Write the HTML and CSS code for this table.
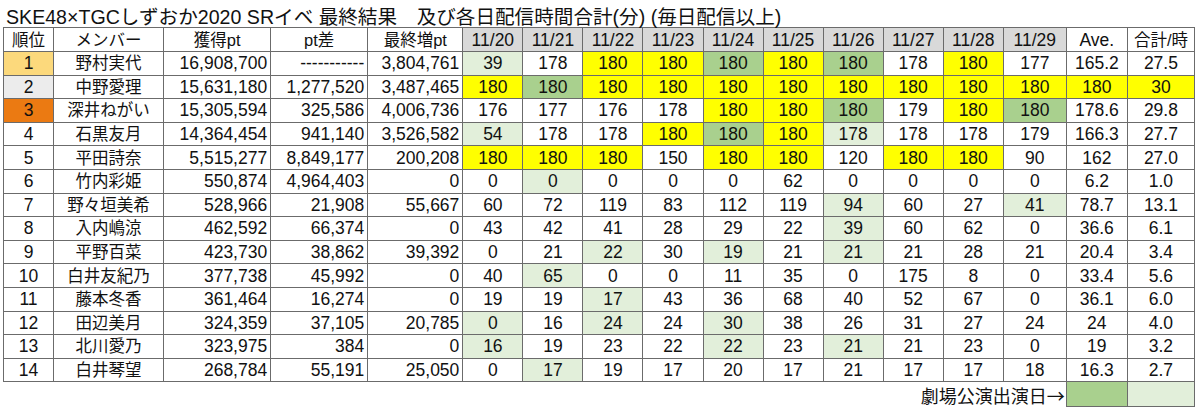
FILE: index.html
```html
<!DOCTYPE html>
<html lang="ja">
<head>
<meta charset="utf-8">
<title>SKE48×TGCしずおか2020 SRイベ 最終結果</title>
<link rel="stylesheet" href="styles.css">
</head>
<body>
<div class="page">
  <div class="title">SKE48×TGCしずおか2020 SRイベ 最終結果　及び各日配信時間合計(分) (毎日配信以上)</div>
  <table class="sheet">
    <colgroup>
      <col class="c-rank"><col class="c-name"><col class="c-pt"><col class="c-diff"><col class="c-inc">
      <col class="c-day"><col class="c-day"><col class="c-day"><col class="c-day"><col class="c-day">
      <col class="c-day"><col class="c-day"><col class="c-day"><col class="c-day"><col class="c-day29">
      <col class="c-ave"><col class="c-tot">
    </colgroup>
    <thead>
      <tr class="head">
        <th class="jp">順位</th><th class="jp">メンバー</th><th class="jp">獲得pt</th><th class="jp">pt差</th><th class="jp">最終増pt</th>
        <th class="dh">11/20</th><th class="dh">11/21</th><th class="dh">11/22</th><th class="dh">11/23</th><th class="dh">11/24</th>
        <th class="dh">11/25</th><th class="dh">11/26</th><th class="dh">11/27</th><th class="dh">11/28</th><th class="dh">11/29</th>
        <th>Ave.</th><th class="jp">合計/時</th>
      </tr>
    </thead>
    <tbody>
      <tr><td class="r1">1</td><td class="nm">野村実代</td><td class="n">16,908,700</td><td class="n">-----------</td><td class="n">3,804,761</td>
        <td class="l">39</td><td>178</td><td class="y">180</td><td class="y">180</td><td class="g">180</td><td class="y">180</td><td class="g">180</td><td>178</td><td class="y">180</td><td>177</td><td>165.2</td><td>27.5</td></tr>
      <tr><td class="r2">2</td><td class="nm">中野愛理</td><td class="n">15,631,180</td><td class="n">1,277,520</td><td class="n">3,487,465</td>
        <td class="y">180</td><td class="g">180</td><td class="y">180</td><td class="y">180</td><td class="y">180</td><td class="y">180</td><td class="y">180</td><td class="y">180</td><td class="y">180</td><td class="y">180</td><td class="y">180</td><td class="y">30</td></tr>
      <tr><td class="r3">3</td><td class="nm">深井ねがい</td><td class="n">15,305,594</td><td class="n">325,586</td><td class="n">4,006,736</td>
        <td>176</td><td>177</td><td>176</td><td>178</td><td class="y">180</td><td class="y">180</td><td class="g">180</td><td>179</td><td class="y">180</td><td class="g">180</td><td>178.6</td><td>29.8</td></tr>
      <tr><td>4</td><td class="nm">石黒友月</td><td class="n">14,364,454</td><td class="n">941,140</td><td class="n">3,526,582</td>
        <td class="l">54</td><td>178</td><td>178</td><td class="y">180</td><td class="g">180</td><td class="y">180</td><td class="l">178</td><td>178</td><td>178</td><td>179</td><td>166.3</td><td>27.7</td></tr>
      <tr><td>5</td><td class="nm">平田詩奈</td><td class="n">5,515,277</td><td class="n">8,849,177</td><td class="n">200,208</td>
        <td class="y">180</td><td class="y">180</td><td class="y">180</td><td>150</td><td class="y">180</td><td class="y">180</td><td>120</td><td class="y">180</td><td class="y">180</td><td>90</td><td>162</td><td>27.0</td></tr>
      <tr><td>6</td><td class="nm">竹内彩姫</td><td class="n">550,874</td><td class="n">4,964,403</td><td class="n">0</td>
        <td>0</td><td class="l">0</td><td>0</td><td>0</td><td>0</td><td>62</td><td>0</td><td>0</td><td>0</td><td>0</td><td>6.2</td><td>1.0</td></tr>
      <tr><td>7</td><td class="nm">野々垣美希</td><td class="n">528,966</td><td class="n">21,908</td><td class="n">55,667</td>
        <td>60</td><td>72</td><td>119</td><td>83</td><td>112</td><td>119</td><td class="l">94</td><td>60</td><td>27</td><td class="l">41</td><td>78.7</td><td>13.1</td></tr>
      <tr><td>8</td><td class="nm">入内嶋涼</td><td class="n">462,592</td><td class="n">66,374</td><td class="n">0</td>
        <td>43</td><td>42</td><td>41</td><td>28</td><td>29</td><td>22</td><td class="l">39</td><td>60</td><td>62</td><td>0</td><td>36.6</td><td>6.1</td></tr>
      <tr><td>9</td><td class="nm">平野百菜</td><td class="n">423,730</td><td class="n">38,862</td><td class="n">39,392</td>
        <td>0</td><td>21</td><td class="l">22</td><td>30</td><td class="l">19</td><td>21</td><td class="l">21</td><td>21</td><td>28</td><td>21</td><td>20.4</td><td>3.4</td></tr>
      <tr><td>10</td><td class="nm">白井友紀乃</td><td class="n">377,738</td><td class="n">45,992</td><td class="n">0</td>
        <td>40</td><td class="l">65</td><td>0</td><td>0</td><td>11</td><td>35</td><td>0</td><td>175</td><td>8</td><td>0</td><td>33.4</td><td>5.6</td></tr>
      <tr><td>11</td><td class="nm">藤本冬香</td><td class="n">361,464</td><td class="n">16,274</td><td class="n">0</td>
        <td>19</td><td>19</td><td class="l">17</td><td>43</td><td>36</td><td>68</td><td>40</td><td>52</td><td>67</td><td>0</td><td>36.1</td><td>6.0</td></tr>
      <tr><td>12</td><td class="nm">田辺美月</td><td class="n">324,359</td><td class="n">37,105</td><td class="n">20,785</td>
        <td class="l">0</td><td>16</td><td class="l">24</td><td>24</td><td class="l">30</td><td>38</td><td>26</td><td>31</td><td>27</td><td>24</td><td>24</td><td>4.0</td></tr>
      <tr><td>13</td><td class="nm">北川愛乃</td><td class="n">323,975</td><td class="n">384</td><td class="n">0</td>
        <td class="l">16</td><td>19</td><td>23</td><td>22</td><td class="l">22</td><td>23</td><td class="l">21</td><td>21</td><td>23</td><td>0</td><td>19</td><td>3.2</td></tr>
      <tr><td>14</td><td class="nm">白井琴望</td><td class="n">268,784</td><td class="n">55,191</td><td class="n">25,050</td>
        <td>0</td><td class="l">17</td><td>19</td><td>17</td><td>20</td><td>17</td><td>21</td><td>17</td><td>17</td><td>18</td><td>16.3</td><td>2.7</td></tr>
    </tbody>
    <tfoot>
      <tr class="legend">
        <td class="legend-label" colspan="15">劇場公演出演日→</td>
        <td class="g box"></td>
        <td class="l box"></td>
      </tr>
    </tfoot>
  </table>
</div>
</body>
</html>
```

FILE: styles.css
```css
html, body {
  margin: 0;
  padding: 0;
  background: #ffffff;
}

.page {
  padding-left: 3px;
  font-family: "Liberation Sans", "Noto Sans CJK JP", sans-serif;
  color: #111111;
}

.title {
  height: 20px;
  padding-top: 7px;
  padding-left: 3px;
  font-size: 19.6px;
  line-height: 20px;
  white-space: nowrap;
}

.sheet {
  table-layout: fixed;
  border-collapse: collapse;
  width: 1192px;
  font-size: 17.5px;
}

.c-rank { width: 50px; }
.c-name { width: 110px; }
.c-pt { width: 107px; }
.c-diff { width: 97px; }
.c-inc { width: 95px; }
.c-day { width: 60px; }
.c-day29 { width: 63px; }
.c-ave { width: 61px; }
.c-tot { width: 67px; }

.sheet th,
.sheet td {
  border: 1px solid #6b6b6b;
  padding: 0 2px;
  text-align: center;
  white-space: nowrap;
  overflow: hidden;
  font-weight: normal;
  line-height: 20px;
}

.sheet thead th {
  height: 23px;
}

.sheet tbody td {
  height: 22.6px;
}

.sheet .jp {
  font-size: 16.5px;
}

.sheet .nm {
  font-size: 16.5px;
}

.sheet .n {
  text-align: right;
  padding-right: 3px;
}

.sheet .dh { background: #d9d9d9; }
.sheet .y { background: #ffff00; }
.sheet .g { background: #a9d08e; }
.sheet .l { background: #e2efda; }
.sheet .r1 { background: #fcd97c; }
.sheet .r2 { background: #ececec; }
.sheet .r3 { background: #eb7a12; }

.sheet .legend td {
  height: 24px;
}

.sheet .legend .legend-label {
  border-left: none;
  border-bottom: none;
  text-align: right;
  padding-right: 1px;
  font-family: "Noto Sans CJK JP", sans-serif;
  font-size: 18px;
}
```
